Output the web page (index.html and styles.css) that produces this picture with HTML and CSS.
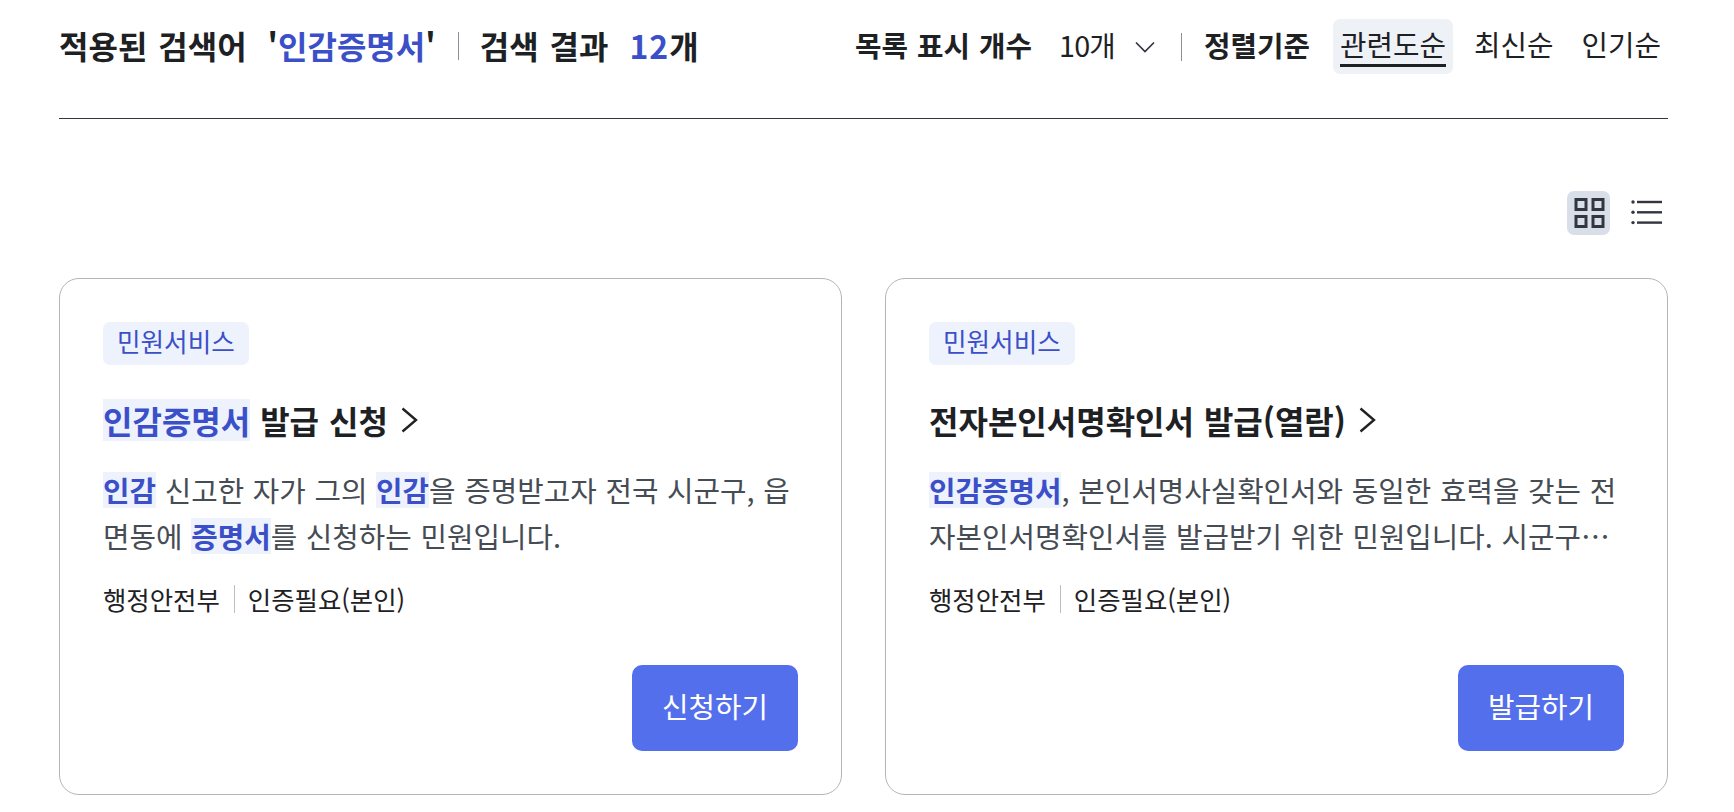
FILE: index.html
```html
<!DOCTYPE html>
<html lang="ko">
<head>
    <meta charset="utf-8">
    <title>검색 결과</title>
    <link rel="stylesheet" href="styles.css">
</head>
<body>
<div class="wrap">
    <div class="top">
        <div class="summary">
            <span>적용된 검색어</span>
            <span class="keyword">'<em>인감증명서</em>'</span>
            <i class="bar"></i>
            <span>검색 결과</span>
            <span class="count"><em>12</em>개</span>
        </div>
        <div class="options">
            <strong class="label">목록 표시 개수</strong>
            <div class="select">
                <span>10개</span>
                <svg width="20" height="12" viewBox="0 0 20 12"><path d="M1 1.5l9 9 9-9" fill="none" stroke="#33363f" stroke-width="1.7"/></svg>
            </div>
            <i class="bar"></i>
            <strong class="label">정렬기준</strong>
            <div class="sort">
                <a class="on"><span>관련도순</span></a>
                <a><span>최신순</span></a>
                <a><span>인기순</span></a>
            </div>
        </div>
    </div>

    <div class="views">
        <button class="view active">
            <svg width="32" height="32" viewBox="0 0 32 32" fill="none" stroke="#33363f" stroke-width="3">
                <rect x="3" y="2.5" width="10" height="10"/>
                <rect x="20" y="2.5" width="10" height="10"/>
                <rect x="3" y="19.5" width="10" height="10"/>
                <rect x="20" y="19.5" width="10" height="10"/>
            </svg>
        </button>
        <button class="view">
            <svg width="32" height="32" viewBox="0 0 32 32" fill="#33363f">
                <circle cx="2" cy="5" r="1.7"/>
                <rect x="6" y="3.8" width="25" height="2.4"/>
                <circle cx="2" cy="15.3" r="1.7"/>
                <rect x="6" y="14.1" width="25" height="2.4"/>
                <circle cx="2" cy="25.6" r="1.7"/>
                <rect x="6" y="24.4" width="25" height="2.4"/>
            </svg>
        </button>
    </div>

    <div class="cards">
        <div class="card">
            <span class="tag">민원서비스</span>
            <h3 class="title"><span><mark>인감증명서</mark> 발급 신청</span>
                <svg width="18" height="26" viewBox="0 0 18 26"><path d="M1.5 1.5L15 13 1.5 24.5" fill="none" stroke="#222" stroke-width="2.4"/></svg>
            </h3>
            <p class="desc"><mark>인감</mark> 신고한 자가 그의 <mark>인감</mark>을 증명받고자 전국 시군구, 읍면동에 <mark>증명서</mark>를 신청하는 민원입니다.</p>
            <div class="meta"><span>행정안전부</span><i class="bar"></i><span>인증필요(본인)</span></div>
            <div class="foot"><a class="btn">신청하기</a></div>
        </div>
        <div class="card">
            <span class="tag">민원서비스</span>
            <h3 class="title"><span>전자본인서명확인서 발급(열람)</span>
                <svg width="18" height="26" viewBox="0 0 18 26"><path d="M1.5 1.5L15 13 1.5 24.5" fill="none" stroke="#222" stroke-width="2.4"/></svg>
            </h3>
            <p class="desc"><mark>인감증명서</mark>, 본인서명사실확인서와 동일한 효력을 갖는 전자본인서명확인서를 발급받기 위한 민원입니다. 시군구청 및 읍면동 주민센터에서 신청할 수 있습니다.</p>
            <div class="meta"><span>행정안전부</span><i class="bar"></i><span>인증필요(본인)</span></div>
            <div class="foot"><a class="btn">발급하기</a></div>
        </div>
    </div>
</div>
</body>
</html>
```

FILE: styles.css
```css
* {
    box-sizing: border-box;
}

body {
    margin: 0;
    background: #fff;
    color: #1e2124;
    font-family: "Noto Sans CJK KR", "Noto Sans", sans-serif;
    word-break: break-all;
}

em {
    font-style: normal;
    color: #3b50c8;
}

.wrap {
    padding: 0 66px 0 59px;
}

.top {
    height: 119px;
    padding-top: 19px;
    display: flex;
    justify-content: space-between;
    align-items: flex-start;
    border-bottom: 1px solid #33363f;
}

.summary {
    display: flex;
    align-items: center;
    height: 52px;
    font-size: 32px;
    font-weight: 700;
    word-spacing: 2px;
}

.keyword {
    margin-left: 21px;
}

.count {
    margin-left: 21px;
}

.count em {
    letter-spacing: 1px;
}

.bar {
    display: block;
    width: 1px;
    background: #8a8f98;
}

.summary .bar {
    height: 28px;
    margin: 2px 21px 0 22px;
}

.options {
    display: flex;
    align-items: center;
    height: 55px;
    font-size: 28.8px;
}

.label {
    padding-bottom: 4px;
    font-weight: 700;
    word-spacing: 1px;
}

.select {
    display: flex;
    align-items: center;
    gap: 20px;
    margin-left: 27px;
    margin-right: 4px;
}

.select span {
    padding-bottom: 4px;
    letter-spacing: -.8px;
}

.options .bar {
    height: 28px;
    margin: 0 22px;
}

.sort {
    display: flex;
    margin-left: 23px;
    gap: 14px;
}

.sort a {
    padding: 0 7px;
    height: 55px;
    line-height: 50px;
    border-radius: 7px;
}

.sort a span {
    display: block;
    height: 48px;
}

.sort .on {
    background: #eef2f7;
}

.sort .on span {
    border-bottom: 3px solid #1e2124;
}

.views {
    display: flex;
    justify-content: flex-end;
    align-items: center;
    gap: 15px;
    height: 44px;
    margin-top: 72px;
}

.view {
    width: 43px;
    height: 44px;
    padding: 0;
    border: 0;
    border-radius: 7px;
    background: none;
    display: flex;
    align-items: center;
    justify-content: center;
}

.view.active {
    background: #d9dfe9;
}

.cards {
    display: grid;
    grid-template-columns: 783px 783px;
    gap: 43px;
    margin-top: 43px;
}

.card {
    height: 517px;
    padding: 43px;
    border: 1px solid #b5b5b5;
    border-radius: 20px;
    display: flex;
    flex-direction: column;
    align-items: flex-start;
}

.tag {
    height: 43px;
    padding: 0 14px;
    line-height: 38px;
    font-size: 25.6px;
    color: #3b50c8;
    background: #eef2fd;
    border-radius: 7px;
}

.title {
    display: flex;
    align-items: center;
    gap: 13px;
    margin: 34px 0 0;
    height: 42px;
    font-size: 32px;
    font-weight: 700;
    line-height: 42px;
    word-spacing: 1px;
}

mark {
    display: inline-block;
    color: #3b50c8;
    font-weight: 700;
    background: #eef2fd;
}

.desc {
    margin: 26px 0 0;
    font-size: 28.8px;
    line-height: 46px;
    color: #464c53;
    word-spacing: .6px;
    display: -webkit-box;
    -webkit-box-orient: vertical;
    -webkit-line-clamp: 2;
    overflow: hidden;
}

.desc mark {
    line-height: 36px;
}

.meta {
    display: flex;
    align-items: center;
    margin-top: 22px;
    font-size: 25.4px;
    height: 36px;
}

.meta .bar {
    height: 28px;
    margin: 0 13px 0 14px;
    background: #bdbdbd;
}

.foot {
    margin-top: auto;
    align-self: flex-end;
}

.btn {
    display: block;
    width: 166px;
    height: 86px;
    line-height: 82px;
    text-align: center;
    font-size: 28.8px;
    color: #fff;
    background: #546fec;
    border-radius: 10px;
}
```
